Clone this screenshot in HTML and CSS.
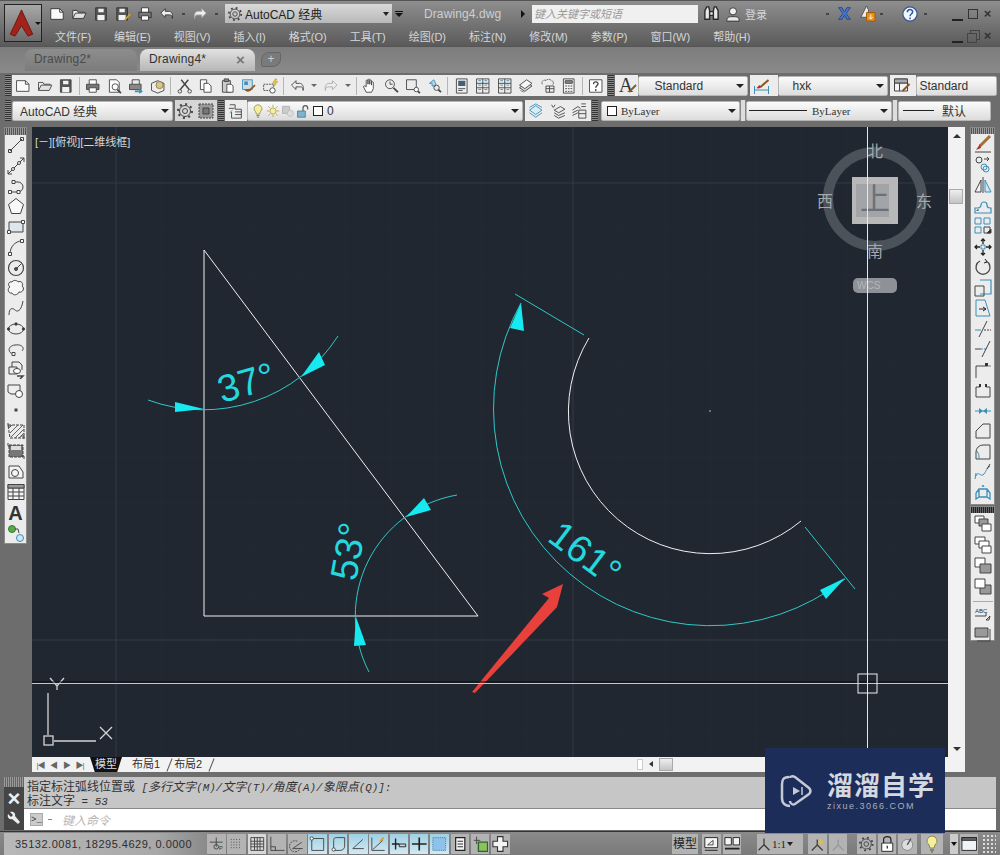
FILE: index.html
```html
<!DOCTYPE html>
<html lang="zh">
<head>
<meta charset="utf-8">
<title>Drawing4.dwg - AutoCAD</title>
<link rel="stylesheet" href="styles.css">
</head>
<body>
<svg class="defs" aria-hidden="true">
<symbol id="new" viewBox="0 0 18 18"><path d="M2 3h10l4 4v8H2z" fill="#fafafa"/><path d="M12 3v4h4"/></symbol>
<symbol id="open" viewBox="0 0 18 18"><path d="M2 14V5h5l1 2h7v2" fill="#f0f0f0"/><path d="M2 14l3-6h12l-3 6z" fill="#e2e2e2"/></symbol>
<symbol id="save" viewBox="0 0 18 18"><path d="M3 2h12v14H3z" fill="#555"/><path d="M6 3h6v4H6zM5 10h8v6H5z" fill="#f2f2f2" stroke="none"/></symbol>
<symbol id="saveas" viewBox="0 0 18 18"><path d="M2 2h12v14H2z" fill="#555"/><path d="M5 3h6v4H5zM4 10h8v6H4z" fill="#f2f2f2" stroke="none"/><path d="M17 9l-6 7" stroke="#d8a020" stroke-width="2"/></symbol>
<symbol id="print" viewBox="0 0 18 18"><path d="M5 7V2h8v5" fill="#fff"/><path d="M2 7h14v6H2z" fill="#777"/><path d="M5 11h8v5H5z" fill="#fff"/></symbol>
<symbol id="preview" viewBox="0 0 18 18"><path d="M3 2h8l3 3v11H3z" fill="#fff"/><circle cx="9.500" cy="10" r="3.500"/><path d="M12 13l4 4" stroke-width="2"/></symbol>
<symbol id="publish" viewBox="0 0 18 18"><path d="M5 7V2h8v5"/><path d="M2 7h13v6H2z" fill="#888"/><path d="M8 15h8" class="blue" stroke-width="2"/><path d="M13 12l4 3-4 3z" class="bluef"/></symbol>
<symbol id="cube" viewBox="0 0 18 18"><path d="M2 6l7-3 7 3v8l-7 3-7-3z" fill="#eee"/><circle cx="11" cy="8" r="4" fill="#d8c690" stroke="#8a7a40"/></symbol>
<symbol id="cut" viewBox="0 0 18 18"><path d="M5 2l9 11M13 2L4 13" stroke-width="1.600"/><circle cx="3.500" cy="15" r="2"/><circle cx="14.500" cy="15" r="2"/></symbol>
<symbol id="copy" viewBox="0 0 18 18"><path d="M3 2h7v11H3z" fill="#fff"/><path d="M7 6h5l3 3v7H7z" fill="#fff"/></symbol>
<symbol id="paste" viewBox="0 0 18 18"><path d="M3 3h9v13H3z" fill="#ccc"/><path d="M5 1h5v3H5z" fill="#888"/><path d="M8 7h5l2 2v7H8z" fill="#fff"/></symbol>
<symbol id="match" viewBox="0 0 18 18"><path d="M2 2h11v11H2z" fill="#cfdbe6" class="blue"/><path d="M4 4h4v4H4z" class="bluef"/><path d="M16 8l-6 6" stroke="#8a5a20" stroke-width="2"/><path d="M4 13c2 3 5 3 7 1l-1-2z" fill="#8a5a20" stroke="none"/></symbol>
<symbol id="block" viewBox="0 0 18 18"><path d="M1 7h11v7H1z" stroke-dasharray="2 1"/><circle cx="11" cy="14" r="3" fill="#fff"/><path d="M14 1l-3 5h3l-2 4 5-6h-3l2-3z" fill="#f0c840" stroke="#b08a10" stroke-width=".5"/></symbol>
<symbol id="undo" viewBox="0 0 18 18"><path d="M7 3L2 8l5 5v-3h5c2 0 3 1 3 4 1-5-1-8-4-8H7z" fill="#eee"/></symbol>
<symbol id="redo" viewBox="0 0 18 18"><path d="M11 3l5 5-5 5v-3H6c-2 0-3 1-3 4-1-5 1-8 4-8h4z" fill="#eee" stroke="#aaa"/></symbol>
<symbol id="pan" viewBox="0 0 18 18"><path d="M5 16L2 10c0-2 2-1 3 0V3c0-1 2-1 2 0v4-5c0-1 2-1 2 0v5-4c0-1 2-1 2 0v5-3c0-1 2-1 2 0v7l-2 4z" fill="#fff"/></symbol>
<symbol id="zrt" viewBox="0 0 18 18"><circle cx="7" cy="7" r="5"/><path d="M7 4v3h3"/><path d="M11 11l5 5" stroke-width="2"/></symbol>
<symbol id="zwin" viewBox="0 0 18 18"><path d="M2 2h11v11H2z"/><circle cx="13" cy="13" r="2.500" fill="#fff"/><path d="M15 15l2 2" stroke-width="2"/></symbol>
<symbol id="zprev" viewBox="0 0 18 18"><path d="M8 2L3 6h3v3h4V6z" class="blue" fill="#b8d4e4"/><circle cx="11" cy="11" r="3"/><path d="M13 13l3 3" stroke-width="2"/></symbol>
<symbol id="props" viewBox="0 0 18 18"><path d="M3 1h12v16H3z" fill="#eee"/><path d="M5 3h8v6H5z" fill="#47607a" stroke="none"/><path d="M5 12h8M5 14h5"/></symbol>
<symbol id="design" viewBox="0 0 18 18"><path d="M2 1h14v16H2zM9 1v16M2 6h14M2 11h14"/><path d="M4 3h3M11 3h3M4 8h3M11 8h3M4 13h3M11 13h3" class="blue"/></symbol>
<symbol id="sheet" viewBox="0 0 18 18"><path d="M2 11l8-6 6 4-8 6z" fill="#ddd"/><path d="M2 8l8-6 6 4-8 6z" fill="#f6f6f6"/><path d="M3 14l4 2" class="blue"/></symbol>
<symbol id="cloud" viewBox="0 0 18 18"><path d="M3 7c-2-3 2-6 4-4 1-2 5-2 6 0 3 0 3 4 1 5" stroke-dasharray="2 1"/><path d="M7 9h9v7H7zM7 12h9M11 9v7"/></symbol>
<symbol id="calc" viewBox="0 0 18 18"><path d="M3 1h12v16H3z" fill="#f2f2f2"/><path d="M5 3h8v3H5z" fill="#888"/><path d="M5 9h8M5 12h8M5 15h8" stroke-dasharray="2 1"/></symbol>
<symbol id="help" viewBox="0 0 18 18"><path d="M2 2h14v14H2z" fill="#fff"/><path d="M6.500 7c0-4 5.500-3 5-.500 0 2-2.500 2-2.500 4.500M9 12.500v2" stroke-width="1.500"/></symbol>
<symbol id="gear" viewBox="0 0 18 18"><circle cx="9" cy="9" r="5.500" stroke-width="1"/><circle cx="9" cy="9" r="2.500"/><circle cx="9" cy="9" r="7" stroke-dasharray="2 3.500" stroke-width="2"/></symbol>
<symbol id="wsave" viewBox="0 0 18 18"><path d="M2 2h14v14H2z" fill="#999" stroke-dasharray="2 1"/><path d="M6 6h6v6H6z" fill="#777"/></symbol>
<symbol id="layers" viewBox="0 0 18 18"><path d="M2 2h6v5h7v10H4V10M8 10h7M8 13h7"/><path d="M1 6h6"/><path d="M2 11l3-3" class="blue"/></symbol>
<symbol id="bulb" viewBox="0 0 18 18"><path d="M9 1a5 5 0 0 0-3 9l1 3h4l1-3a5 5 0 0 0-3-9z" fill="#f6ee9c" stroke="#8a8a50"/><path d="M7 15h4M8 17h2" stroke="#555"/></symbol>
<symbol id="sun" viewBox="0 0 18 18"><circle cx="9" cy="9" r="4" fill="#f6ee9c" stroke="#9a9a50"/><path d="M9 1v3M9 14v3M1 9h3M14 9h3M3 3l2 2M13 13l2 2M3 15l2-2M13 5l2-2" stroke="#b09a40"/></symbol>
<symbol id="lfreeze" viewBox="0 0 18 18"><path d="M2 3h9v9H2z" fill="#ccc" stroke="#aaa"/><circle cx="12" cy="12" r="4" fill="#ddd" stroke="#bbb"/></symbol>
<symbol id="unlock" viewBox="0 0 18 18"><path d="M2 9h10v8H2z" fill="#7fb3d0" stroke="#3b7898"/><path d="M9 9V5c0-4 6-4 6 0v2" stroke="#555" stroke-width="1.500"/></symbol>
<symbol id="lay1" viewBox="0 0 18 18"><path d="M2 8l7-5 7 5-7 5z" fill="#d8ecf4" class="blue"/><path d="M2 11l7 5 7-5M2 5l7-4 7 4" class="blue"/></symbol>
<symbol id="lay2" viewBox="0 0 18 18"><path d="M2 2l2 3 2-3M5 8l7-4 5 3-7 4zM5 11l5 3 7-3M5 14l5 3 7-3"/></symbol>
<symbol id="lay3" viewBox="0 0 18 18"><path d="M2 8l6-4 3 2M2 11l6-3M2 14l6-3"/><path d="M9 8h8v9H9zM9 12h8M12 1h5M12 4h5"/></symbol>
<symbol id="brush" viewBox="0 0 18 18"><path d="M17 7l-7 7" stroke="#8a5a20" stroke-width="2"/></symbol>
<symbol id="dimstyle" viewBox="0 0 18 18"><path d="M2 9v8M16 9v8M2 13h14" class="blue"/><path d="M16 3L8 10" stroke="#8a5a20" stroke-width="2"/><path d="M4 11c2 1 4 0 5-1l-2-2z" fill="#b0302a" stroke="none"/></symbol>
<symbol id="tablestyle" viewBox="0 0 18 18"><path d="M2 2h13v12H2zM2 6h13M7 6v8" fill="#f4f4f4"/><path d="M2 2h13v4H2z" fill="#aaa"/><path d="M17 7l-7 7" stroke="#8a5a20" stroke-width="2"/></symbol>

<symbol id="line" viewBox="0 0 18 18"><path d="M3 15L15 3"/><path d="M1.500 13.500h3v3h-3zM13.500 1.500h3v3h-3z"/></symbol>
<symbol id="xline" viewBox="0 0 18 18"><path d="M1 17L17 1M13 1h4v4M1 13v4h4"/><circle cx="6" cy="12" r="1.500" fill="#fff"/><circle cx="12" cy="6" r="1.500" fill="#fff"/></symbol>
<symbol id="pline" viewBox="0 0 18 18"><path d="M3 15h8a5 5 0 0 0 0-10H7"/><path d="M1.500 13.500h3v3h-3zM5 3.500h3v3H5zM10 13.500h3v3h-3z" fill="#fff"/></symbol>
<symbol id="polygon" viewBox="0 0 18 18"><path d="M9 1.500l7.500 6-3 9h-9l-3-9z" fill="#f8f8f8"/></symbol>
<symbol id="rect" viewBox="0 0 18 18"><path d="M2 4h14v10H2z" fill="#dfe6ec"/><path d="M.5 12.500h3v3h-3zM14.500 2.500h3v3h-3z" fill="#fff"/></symbol>
<symbol id="arc" viewBox="0 0 18 18"><path d="M3 16C3 9 8 3 15 3"/><path d="M1.500 14.500h3v3h-3zM13.500 1.500h3v3h-3z" fill="#fff"/></symbol>
<symbol id="circle" viewBox="0 0 18 18"><circle cx="9" cy="9" r="7.500" stroke-width="1.200"/><circle cx="9" cy="10" r="1.500" fill="#555"/><path d="M9 10l5-5"/></symbol>
<symbol id="rev" viewBox="0 0 18 18"><path d="M5 3c2-3 6-1 6 0 3-2 6 2 4 4 3 2 1 7-3 6-1 3-6 4-7 1-4 1-5-5-2-6-3-2-1-6 2-5z" fill="#f6f6f6"/></symbol>
<symbol id="spline" viewBox="0 0 18 18"><path d="M2 16c0-8 4-7 6-5s6 2 8-9"/></symbol>
<symbol id="ellipse" viewBox="0 0 18 18"><ellipse cx="9" cy="9" rx="7.500" ry="5"/><circle cx="9" cy="4" r="1.200" fill="#333"/><circle cx="1.500" cy="9" r="1.200" fill="#333"/><circle cx="16.500" cy="9" r="1.200" fill="#333"/></symbol>
<symbol id="earc" viewBox="0 0 18 18"><path d="M6 14C1 13 0 6 8 5c7-1 10 3 7 6"/><path d="M5 12.500h3v3H5z" fill="#fff"/></symbol>
<symbol id="insert" viewBox="0 0 18 18"><path d="M5 1h7l3 3v5M5 1v5"/><path d="M2 6h8v7H2z" fill="#eee"/><ellipse cx="10" cy="10" rx="3.500" ry="2.500" fill="#fff"/><path d="M10 15h6l-3 3" stroke-width="1.500"/></symbol>
<symbol id="mblock" viewBox="0 0 18 18"><path d="M1 4h12v9H4l-3-2z" fill="#eee"/><circle cx="12" cy="13" r="3.500" fill="#fff"/></symbol>
<symbol id="point" viewBox="0 0 18 18"><rect x="7.500" y="7.500" width="3" height="3" fill="#444" stroke="none"/></symbol>
<symbol id="hatch" viewBox="0 0 18 18"><path d="M1 3h16v13H3z" stroke-dasharray="3 1"/><path d="M1 7l4-4M3 11l8-8M4 15l12-12M8 16l9-9M12 16l5-5" stroke="#666"/><path d="M1 1v3h3M14 14h3v3"/></symbol>
<symbol id="grad" viewBox="0 0 18 18"><path d="M2 3h14v12H2z" fill="#777" stroke-dasharray="3 1"/><path d="M4 4h10v4H4z" fill="#ddd" stroke="none"/><path d="M1 1v3h3M14 14h3v3"/></symbol>
<symbol id="region" viewBox="0 0 18 18"><path d="M2 3h10l4 6v6H2z" fill="#f4f4f4"/><circle cx="8" cy="10" r="3.500"/></symbol>
<symbol id="table" viewBox="0 0 18 18"><path d="M1 1.500h16v15H1zM1 5h16M1 9h16M1 13h16M6 5v11.500M12 5v11.500" fill="#f4f4f4"/><path d="M1 1.500h16V5H1z" fill="#999"/></symbol>
<symbol id="addsel" viewBox="0 0 18 18"><circle cx="5" cy="5" r="3.500" fill="#5aa84a" stroke="#3a7a30"/><circle cx="13" cy="14" r="3.500" fill="#cfe6f4" class="blue"/><path d="M8 5h3l1 4"/></symbol>

<symbol id="erase" viewBox="0 0 18 18"><path d="M16 1L6 11" stroke="#a87038" stroke-width="3"/><path d="M6 9l-4 6 5-2z" fill="#b0302a" stroke="none"/><path d="M1 17h16"/></symbol>
<symbol id="mcopy" viewBox="0 0 18 18"><circle cx="5" cy="4" r="3"/><circle cx="12" cy="13" r="3" class="blue"/><circle cx="10" cy="11" r="3" class="blue"/><path d="M10 3h5l-2-2M15 3l-2 2"/></symbol>
<symbol id="mirror" viewBox="0 0 18 18"><path d="M9 1v16"/><path d="M7 4v12H1z" fill="#f4f4f4"/><path d="M11 4v12h6z" class="blue" fill="#cfe6f4"/></symbol>
<symbol id="offset" viewBox="0 0 18 18"><path d="M1 16V11h3a3 3 0 0 0 3-3 3 3 0 0 1 6 0 3 3 0 0 0 3 3h1v5z" class="blue" stroke-width="1.200"/><path d="M3 14v-1h2"/></symbol>
<symbol id="array" viewBox="0 0 18 18"><path d="M1 1h6v6H1zM10 1h6v6h-6zM1 10h6v6H1z" class="blue"/><path d="M10 10h6v6h-6z"/><path d="M13 16l4-4v4z" fill="#222"/></symbol>
<symbol id="move" viewBox="0 0 18 18"><path d="M7 7h4v4H7z" class="blue"/><path d="M9 1v5M9 12v5M1 9h5M12 9h5M7 3l2-2 2 2M7 15l2 2 2-2M3 7L1 9l2 2M15 7l2 2-2 2" stroke="#222" stroke-width="1.300"/></symbol>
<symbol id="rotate" viewBox="0 0 18 18"><path d="M6 3a7 7 0 1 0 6 0" stroke-width="1.300"/><path d="M11 1l2 3-3 1" stroke="#222"/></symbol>
<symbol id="scale" viewBox="0 0 18 18"><path d="M6 1h11v14H6" class="blue" stroke-width="1.200"/><path d="M1 7h9v10H1z"/></symbol>
<symbol id="stretch" viewBox="0 0 18 18"><path d="M2 1h9l5 16H2z" class="blue"/><path d="M5 10h7M9 8l3 2-3 2" stroke="#222"/></symbol>
<symbol id="trim" viewBox="0 0 18 18"><path d="M1 10h6" class="blue"/><path d="M10 10h7" stroke-dasharray="2 1"/><path d="M13 1L5 17"/></symbol>
<symbol id="extend" viewBox="0 0 18 18"><path d="M1 9h6"/><path d="M7 9h5" class="blue" stroke-dasharray="2 1"/><path d="M16 1L8 17"/></symbol>
<symbol id="breakat" viewBox="0 0 18 18"><path d="M2 17V5h11"/><path d="M13 5h4" stroke="#777"/><rect x="11" y="2" width="3" height="3" fill="#333" stroke="none"/></symbol>
<symbol id="brk" viewBox="0 0 18 18"><path d="M2 16V6h4M12 6h4v10"/><path d="M5 3h2v3H5zM11 3h2v3h-2z" fill="#333" stroke="none"/><path d="M2 16h14"/></symbol>
<symbol id="join" viewBox="0 0 18 18"><path d="M1 9h16" class="blue"/><path d="M5 6l4 3-4 3zM13 6L9 9l4 3z" class="bluef"/></symbol>
<symbol id="chamfer" viewBox="0 0 18 18"><path d="M2 16V9l7-7h7v14z"/></symbol>
<symbol id="fillet" viewBox="0 0 18 18"><path d="M2 16V9a7 7 0 0 1 7-7h7v14z"/><path d="M5 16a10 10 0 0 0-2-8" class="blue"/></symbol>
<symbol id="blend" viewBox="0 0 18 18"><path d="M1 16l1-6M2 13c2-6 5 2 8-2s2-5 6-8" class="blue"/><path d="M13 6l3-5"/></symbol>
<symbol id="explode" viewBox="0 0 18 18"><path d="M5 5h8v8H5zM2 9l3-4M13 5l3 4v6l-3-2M2 9v6l3-2" class="blue" stroke-width="1.300"/><path d="M8 3l1-2 1 2" class="blue"/></symbol>
<symbol id="front" viewBox="0 0 18 18"><path d="M1 1h9v7H1z" fill="#fff"/><path d="M5 4h9v7H5z" fill="#999"/><path d="M8 9h9v7H8z" fill="#fff"/></symbol>
<symbol id="back" viewBox="0 0 18 18"><path d="M1 1h10v7H1z" fill="#fff"/><path d="M5 5h10v7H5z" fill="#fff"/><path d="M8 10h9v7H8z" fill="#fff"/></symbol>
<symbol id="over" viewBox="0 0 18 18"><path d="M1 1h10v9H1z" fill="#fff"/><path d="M6 7h11v9H6z" fill="#999"/></symbol>
<symbol id="under" viewBox="0 0 18 18"><path d="M6 7h11v9H6z" fill="#999"/><path d="M1 1h10v9H1z" fill="#fff"/></symbol>
<symbol id="abc" viewBox="0 0 18 18"><path d="M1 11h11V8M15 15h-3l4-4z"/></symbol>
<symbol id="sz" viewBox="0 0 18 18"><path d="M1 2h13v9H1z" fill="#999"/><path d="M16 3v12M3 15h13"/></symbol>

<symbol id="s1" viewBox="0 0 18 18"><path d="M2 7h14M9 2v10"/><circle cx="9" cy="12" r="2.500"/></symbol>
<symbol id="s2" viewBox="0 0 18 18"><path d="M3 4h12M3 7h12M3 10h12M3 13h12" stroke-dasharray="1 2"/></symbol>
<symbol id="s3" viewBox="0 0 18 18"><path d="M2 2h14v14H2zM2 6h14M2 9h14M2 12h14M6 2v14M9 2v14M12 2v14"/></symbol>
<symbol id="s4" viewBox="0 0 18 18"><path d="M2 1v15h15M2 12h5v4"/></symbol>
<symbol id="s5" viewBox="0 0 18 18"><path d="M4 14l10-7M4 14h11"/><path d="M9 6a6 6 0 1 0 3 8" stroke-dasharray="2 1"/></symbol>
<symbol id="s6" viewBox="0 0 18 18"><path d="M3 3h13v13H3z"/><circle cx="3" cy="3" r="1.800" fill="#fff"/></symbol>
<symbol id="s7" viewBox="0 0 18 18"><path d="M4 14V5c0-2 1-3 3-3h9v9c0 3-2 5-5 5H5"/><circle cx="4" cy="15" r="1.800" fill="#fff"/></symbol>
<symbol id="s8" viewBox="0 0 18 18"><path d="M3 14L14 4M3 14h12"/></symbol>
<symbol id="s9" viewBox="0 0 18 18"><path d="M2 2v14h14M3 15L14 5"/><path d="M11 6l4-4" stroke="#e0a020" stroke-width="2"/></symbol>
<symbol id="s10" viewBox="0 0 18 18"><path d="M1 9h8M5 3v12" stroke="#222" stroke-width="1.500"/><path d="M9 9h7v3H9z" stroke="#222"/></symbol>
<symbol id="s11" viewBox="0 0 18 18"><path d="M1 9h16M9 2v14" stroke="#222" stroke-width="1.800"/></symbol>
<symbol id="s12" viewBox="0 0 18 18"><path d="M2 2h14v14H2z" fill="#8ec2ea" stroke="#3b7898" stroke-dasharray="1 1"/></symbol>
<symbol id="s13" viewBox="0 0 18 18"><path d="M4 2h10v14H4z" fill="#f4f4f4" stroke="#222" stroke-width="1.300"/><path d="M6 6h6M6 9h6M6 12h6" stroke="#222"/></symbol>
<symbol id="s14" viewBox="0 0 18 18"><path d="M2 5h7M5 1v8"/><path d="M7 7h10v10H7z" fill="#8cc060" stroke="#2a6a20" stroke-width="1.500"/></symbol>
<symbol id="s15" viewBox="0 0 18 18"><path d="M6 1h6v5h5v6h-5v5H6v-5H1V6h5z" fill="#f4f4f4" stroke="#333" stroke-width="1.200"/></symbol>
<symbol id="pap" viewBox="0 0 18 18"><path d="M2 2h14v11H2z" fill="#f4f4f4" stroke="#222"/><path d="M5 10l6-5v5z"/><path d="M2 16h14" stroke-width="1.500"/></symbol>
<symbol id="qv" viewBox="0 0 18 18"><path d="M1 2h7v8H1zM10 2h7v8h-7z" fill="#f4f4f4" stroke="#222"/><path d="M1 14h16" stroke-width="2" stroke="#222"/></symbol>
<symbol id="ann" viewBox="0 0 18 18"><path d="M9 2v8M9 10l-7 7M9 10l7 7" stroke="#333" stroke-width="1.500"/></symbol>
<symbol id="ann2" viewBox="0 0 18 18"><path d="M9 4v6L3 16M9 10l6 6" stroke="#444" stroke-width="1.500"/><path d="M12 3l2 3 3 1-3 1-1 3-1-3-3-1 3-1z" fill="#e8c040" stroke="none"/></symbol>
<symbol id="ann3" viewBox="0 0 18 18"><path d="M9 4v6L3 16M9 10l6 6" stroke="#999" stroke-width="1.500"/></symbol>
<symbol id="lockb" viewBox="0 0 18 18"><path d="M3 8h12v9H3z" fill="#fff" stroke="#222"/><path d="M5 8V4c0-4 8-4 8 0v4M9 11v3" stroke="#222" stroke-width="1.300"/></symbol>
<symbol id="hw" viewBox="0 0 18 18"><circle cx="9" cy="10" r="6" fill="#ddd" stroke="#888"/><path d="M9 10l4-7" stroke="#555" stroke-width="1.500"/></symbol>
<symbol id="win" viewBox="0 0 18 18"><path d="M1 2h16v14H1z" fill="#eef4f8" stroke="#222"/><path d="M1 2h16v3H1z" fill="#666" stroke="#222"/></symbol>
<symbol id="binoc" viewBox="0 0 18 18"><path d="M2 15V6l2-4h2l1 4v9zM16 15V6l-2-4h-2l-1 4v9zM7 7h4v4H7z" fill="#e8e8e8" stroke="#2a2a2a" stroke-width="1.500"/></symbol>
<symbol id="user" viewBox="0 0 18 18"><circle cx="9" cy="6" r="4" fill="#f0f0f0" stroke="#333"/><path d="M2 17c0-5 3-5 7-5s7 0 7 5z" fill="#e8e8e8" stroke="#333"/></symbol>
<symbol id="xlogo" viewBox="0 0 18 18"><path d="M2 2h4l3 5 3-5h4l-5 7 5 7h-4l-3-5-3 5H2l5-7z" fill="#4a78c8" stroke="#1e3e88"/></symbol>
<symbol id="alert" viewBox="0 0 18 18"><path d="M8 1L2 13h8V5z" fill="#eee" stroke="#555"/><path d="M8 8h9v9H8z" fill="#e89020" stroke="#a05a00"/><path d="M12.500 10v4M10.500 13l2 2 2-2" stroke="#fff"/></symbol>
<symbol id="ques" viewBox="0 0 18 18"><circle cx="9" cy="9" r="8" fill="#f4f8fc" stroke="#3a5a90" stroke-width="1.400"/><path d="M6 7c0-4 6-4 6-.500C12 9 9 9 9 11.500M9 13v1.800" stroke="#2a5ab0" stroke-width="1.800"/></symbol>
</svg>

<header class="title">
  <div class="app-btn">
    <svg class="app-logo" viewBox="0 0 26 30"><path d="M13 1L1 27l5 2 7-11 7 11 5-2z" class="logo-a"/></svg>
    <span class="app-arrow"></span>
  </div>
  <div class="title-col">
    <div class="qat">
      <svg class="i q"><use href="#new"/></svg>
      <svg class="i q"><use href="#open"/></svg>
      <svg class="i q"><use href="#save"/></svg>
      <svg class="i q"><use href="#saveas"/></svg>
      <svg class="i q"><use href="#print"/></svg>
      <svg class="i q"><use href="#undo"/></svg>
      <span class="dot"></span>
      <svg class="i q"><use href="#redo"/></svg>
      <span class="dot"></span>
      <div class="ws-combo"><svg class="i"><use href="#gear"/></svg><span>AutoCAD 经典</span></div>
      <span class="down-bar"></span>
      <span class="doc-name">Drawing4.dwg</span>
      <span class="right-arrow"></span>
      <div class="search">键入关键字或短语</div>
      <svg class="i s-binoc"><use href="#binoc"/></svg>
      <svg class="i s-user"><use href="#user"/></svg>
      <span class="login">登录</span>
      <span class="dot d-login"></span>
      <svg class="i s-x"><use href="#xlogo"/></svg>
      <svg class="i s-alert"><use href="#alert"/></svg>
      <span class="dot d-alert"></span>
      <svg class="i s-help"><use href="#ques"/></svg>
      <span class="dot d-help"></span>
      <div class="winctl top"><i class="min"></i><i class="max"></i><i class="cls">×</i></div>
    </div>
    <nav class="menu">
      <span>文件(F)</span><span>编辑(E)</span><span>视图(V)</span><span>插入(I)</span><span>格式(O)</span><span>工具(T)</span><span>绘图(D)</span><span>标注(N)</span><span>修改(M)</span><span>参数(P)</span><span>窗口(W)</span><span>帮助(H)</span>
      <div class="winctl"><i class="min"></i><i class="rst"></i><i class="cls">×</i></div>
    </nav>
  </div>
</header>

<div class="tabs">
  <div class="tab">Drawing2*</div>
  <div class="tab active">Drawing4*<b>×</b></div>
  <div class="tab-add"><span>+</span></div>
</div>

<div class="tbar one">
  <span class="grip"></span>
  <div class="strip">
    <svg class="i b"><use href="#new"/></svg><svg class="i b"><use href="#open"/></svg><svg class="i b"><use href="#save"/></svg><span class="sep"></span>
    <svg class="i b"><use href="#print"/></svg><svg class="i b"><use href="#preview"/></svg><svg class="i b"><use href="#publish"/></svg><svg class="i b"><use href="#cube"/></svg><span class="sep"></span>
    <svg class="i b"><use href="#cut"/></svg><svg class="i b"><use href="#copy"/></svg><svg class="i b"><use href="#paste"/></svg><svg class="i b"><use href="#match"/></svg><svg class="i b"><use href="#block"/></svg><span class="sep"></span>
    <svg class="i b"><use href="#undo"/></svg><span class="drop"></span><svg class="i b"><use href="#redo"/></svg><span class="drop"></span><span class="sep"></span>
    <svg class="i b"><use href="#pan"/></svg><svg class="i b"><use href="#zrt"/></svg><svg class="i b"><use href="#zwin"/></svg><svg class="i b"><use href="#zprev"/></svg><span class="sep"></span>
    <svg class="i b"><use href="#props"/></svg><svg class="i b"><use href="#design"/></svg><svg class="i b"><use href="#design"/></svg><svg class="i b"><use href="#sheet"/></svg><svg class="i b"><use href="#cloud"/></svg><svg class="i b"><use href="#calc"/></svg><span class="sep"></span>
    <svg class="i b"><use href="#help"/></svg>
  </div>
  <span class="grip"></span>
  <div class="strip s-a"><span class="a-glyph">A</span><svg class="i a-brush"><use href="#brush"/></svg></div>
  <div class="combo c-std">Standard</div>
  <div class="strip s-d"><svg class="i b"><use href="#dimstyle"/></svg></div>
  <div class="combo c-hxk">hxk</div>
  <div class="strip s-t"><svg class="i b"><use href="#tablestyle"/></svg></div>
  <div class="combo c-std3">Standard</div>
</div>

<div class="tbar two">
  <span class="grip"></span>
  <div class="combo c-ws">AutoCAD 经典</div>
  <div class="strip s-g"><svg class="i g"><use href="#gear"/></svg><svg class="i g"><use href="#wsave"/></svg></div>
  <span class="grip"></span>
  <div class="strip s-l"><svg class="i b"><use href="#layers"/></svg></div>
  <div class="combo c-layer">
    <svg class="i l"><use href="#bulb"/></svg><svg class="i l"><use href="#sun"/></svg><svg class="i l"><use href="#lfreeze"/></svg><svg class="i l"><use href="#unlock"/></svg><span class="swatch"></span><span>0</span>
  </div>
  <div class="strip s-m"><svg class="i b"><use href="#lay1"/></svg><svg class="i b"><use href="#lay2"/></svg><svg class="i b"><use href="#lay3"/></svg></div>
  <span class="grip"></span>
  <div class="combo c-color"><span class="swatch"></span><span class="serif">ByLayer</span></div>
  <span class="grip light"></span>
  <div class="combo c-ltype"><span class="ln long"></span><span class="serif">ByLayer</span></div>
  <span class="grip light"></span>
  <div class="combo c-lw"><span class="ln short"></span><span>默认</span></div>
</div>

<main class="main">
  <aside class="vbar left">
    <span class="hgrip"></span>
    <svg class="i v"><use href="#line"/></svg><svg class="i v"><use href="#xline"/></svg><svg class="i v"><use href="#pline"/></svg><svg class="i v"><use href="#polygon"/></svg><svg class="i v"><use href="#rect"/></svg><svg class="i v"><use href="#arc"/></svg><svg class="i v"><use href="#circle"/></svg><svg class="i v"><use href="#rev"/></svg><svg class="i v"><use href="#spline"/></svg><svg class="i v"><use href="#ellipse"/></svg><svg class="i v"><use href="#earc"/></svg><svg class="i v"><use href="#insert"/></svg><svg class="i v"><use href="#mblock"/></svg><svg class="i v"><use href="#point"/></svg><svg class="i v"><use href="#hatch"/></svg><svg class="i v"><use href="#grad"/></svg><svg class="i v"><use href="#region"/></svg><svg class="i v"><use href="#table"/></svg>
    <span class="big-a">A</span>
    <svg class="i v"><use href="#addsel"/></svg>
  </aside>

  <section class="center">
    <div class="view-row">
      <div class="canvas">
        <svg class="drawing" viewBox="32 127 916 630">
          <g class="grid-minor">
            <path d="M162 127v630M208 127v630M253 127v630M299 127v630M345 127v630M390 127v630M436 127v630M482 127v630M527 127v630M619 127v630M665 127v630M710 127v630M756 127v630M802 127v630M847 127v630M893 127v630"/>
            <path d="M32 229h916M32 275h916M32 320h916M32 366h916M32 412h916M32 457h916M32 503h916M32 549h916M32 594h916M32 686h916M32 732h916"/>
          </g>
          <path class="grid-major" d="M116 127v630M573 127v630M32 183h916M32 640h916"/>

          <path class="white" d="M204 250L478 616H204Z"/>
          <path class="white" d="M589 338A142 142 0 0 0 801 521"/>
          <circle class="dot-c" cx="710" cy="411" r=".7"/>

          <path class="cyan" d="M148 400A160 160 0 0 0 338 336"/>
          <path class="cyan" d="M457 495A122.500 122.500 0 0 0 369 672"/>
          <path class="cyan" d="M521 303A217 217 0 0 0 845 579"/>
          <path class="cyan" d="M515 294L584 335M805 527L855 589"/>
          <path class="arrow" d="M204 409L175 402L175 412Z"/>
          <path class="arrow" d="M301 377L319 352L325 365Z"/>
          <path class="arrow" d="M406 517L424 498L431 510Z"/>
          <path class="arrow" d="M356 617L354 646L366 645Z"/>
          <path class="arrow" d="M521 303L510 328L524 331Z"/>
          <path class="arrow" d="M845 578L820 590L826 599Z"/>
          <text class="dim" transform="translate(222 403) rotate(-16)">37°</text>
          <text class="dim" transform="translate(356 582) rotate(-80)">53°</text>
          <text class="dim" transform="translate(546 540) rotate(37)">161°</text>

          <path class="red" d="M563 584L542 594L549 598L472 692L475 693L557 607Z"/>

          <path class="ucs" d="M48 693V735M54 741H96M100 727L112 739M112 727L100 739M50 678L57 686L64 678M57 686V690"/>
          <rect class="ucs" x="44" y="736" width="9" height="9"/>

          <g class="cube-g">
            <circle class="ring" cx="875" cy="199" r="47"/>
            <rect class="cube-face" x="852" y="177" width="46" height="47"/>
            <rect class="cube-in" x="856" y="184" width="33" height="33"/>
            <text class="cube-top" x="875" y="209">上</text>
            <text class="cube-dir" x="875" y="157">北</text>
            <text class="cube-dir" x="875" y="257">南</text>
            <text class="cube-dir" x="825" y="207">西</text>
            <text class="cube-dir" x="924" y="207">东</text>
            <rect class="wcs" x="853" y="278" width="44" height="15" rx="5"/>
            <text class="wcs-t" x="857" y="289">WCS</text>
          </g>

          <path class="cross-shadow" d="M32 682H948"/>
          <path class="cross-h" d="M32 683.500H948"/>
          <path class="cross-v" d="M867.500 127V757"/>
          <rect class="pick" x="858" y="674" width="19" height="19"/>
        </svg>
        <div class="vp-label">[－][俯视][二维线框]</div>
      </div>
      <div class="vscroll"><span class="up"></span><span class="thumb"></span><span class="dn"></span></div>
    </div>
    <div class="layouts">
      <span class="nav">|◀</span><span class="nav">◀</span><span class="nav">▶</span><span class="nav">▶|</span>
      <span class="ltab cur">模型</span><span class="ltab slash">布局1</span><span class="ltab slash">布局2</span>
      <span class="hhandle"></span><span class="harrow"></span><span class="hthumb"></span>
    </div>
  </section>

  <aside class="rightcol">
    <div class="vbar right">
      <span class="hgrip"></span>
      <svg class="i v"><use href="#erase"/></svg><svg class="i v"><use href="#mcopy"/></svg><svg class="i v"><use href="#mirror"/></svg><svg class="i v"><use href="#offset"/></svg><svg class="i v"><use href="#array"/></svg><svg class="i v"><use href="#move"/></svg><svg class="i v"><use href="#rotate"/></svg><svg class="i v"><use href="#scale"/></svg><svg class="i v"><use href="#stretch"/></svg><svg class="i v"><use href="#trim"/></svg><svg class="i v"><use href="#extend"/></svg><svg class="i v"><use href="#breakat"/></svg><svg class="i v"><use href="#brk"/></svg><svg class="i v"><use href="#join"/></svg><svg class="i v"><use href="#chamfer"/></svg><svg class="i v"><use href="#fillet"/></svg><svg class="i v"><use href="#blend"/></svg><svg class="i v"><use href="#explode"/></svg>
    </div>
    <div class="vbar right2">
      <span class="hgrip"></span>
      <svg class="i v"><use href="#front"/></svg><svg class="i v"><use href="#back"/></svg><svg class="i v"><use href="#over"/></svg><svg class="i v"><use href="#under"/></svg>
      <span class="hsep"></span>
      <svg class="i v" viewBox="0 0 18 18"><text x="1" y="8" class="tiny">ABC</text><use href="#abc"/></svg><svg class="i v"><use href="#sz"/></svg>
    </div>
  </aside>
</main>

<section class="cmd">
  <div class="cmd-side"><span class="hgrip dark"></span><span class="cmd-x">×</span>
    <svg class="wrench" viewBox="0 0 14 14"><path d="M1 3l3 3 2-2-3-3c3-1 6 1 5 4l5 6-2 2-6-5C2 9 0 6 1 3z"/></svg>
  </div>
  <div class="cmd-main">
    <div class="cmd-log">
      <div class="log-line"><span class="cj">指定标注弧线位置或</span> <em>[</em><em class="cj">多行文字</em><em>(M)/</em><em class="cj">文字</em><em>(T)/</em><em class="cj">角度</em><em>(A)/</em><em class="cj">象限点</em><em>(Q)]:</em></div>
      <div class="log-line"><span class="cj">标注文字</span> <em>= 53</em></div>
    </div>
    <div class="cmd-input"><span class="prompt">&gt;_</span><span class="p-drop"></span><span class="ph">键入命令</span></div>
  </div>
</section>

<footer class="status">
  <div class="coords">35132.0081, 18295.4629, 0.0000</div>
  <div class="chips">
    <svg class="i c" viewBox="0 0 18 18"><use href="#s1"/><text x="12" y="16" class="tiny">P</text></svg><svg class="i c"><use href="#s2"/></svg><svg class="i c on"><use href="#s3"/></svg><svg class="i c"><use href="#s4"/></svg><svg class="i c"><use href="#s5"/></svg><svg class="i c act"><use href="#s6"/></svg><svg class="i c act"><use href="#s7"/></svg><svg class="i c act"><use href="#s8"/></svg><svg class="i c act"><use href="#s9"/></svg><svg class="i c act"><use href="#s10"/></svg><svg class="i c act"><use href="#s11"/></svg><svg class="i c act"><use href="#s12"/></svg><svg class="i c"><use href="#s13"/></svg><svg class="i c"><use href="#s14"/></svg><svg class="i c"><use href="#s15"/></svg>
  </div>
  <div class="st-right">
    <span class="st-model">模型</span>
    <svg class="i c"><use href="#pap"/></svg><svg class="i c"><use href="#qv"/></svg>
    <div class="scale"><svg class="i"><use href="#ann"/></svg><span>1:1</span><span class="s-drop"></span></div>
    <svg class="i c"><use href="#ann2"/></svg><svg class="i c"><use href="#ann3"/></svg>
    <svg class="i c sp"><use href="#gear"/></svg><svg class="i c"><use href="#lockb"/></svg><svg class="i c"><use href="#hw"/></svg>
    <div class="bulb-chip"><svg class="i"><use href="#bulb"/></svg></div>
    <span class="st-drop"></span>
    <svg class="i c"><use href="#win"/></svg>
    <span class="resize"></span>
  </div>
</footer>

<aside class="wm">
  <svg class="wm-logo" viewBox="0 0 36 36"><path d="M10 4c-6 0-7 3-7 8v13c0 6 4 8 8 8" class="wm-s"/><path d="M11 5c0-2 3-2 5-1l14 11c2 2 2 4 0 6L16 31c-2 1-5 0-5-3" class="wm-s"/><path d="M14 14l7 4-7 4z" class="wm-f"/><path d="M23 14v8" class="wm-s2"/></svg>
  <div class="wm-text"><div class="wm-cn">溜溜自学</div><div class="wm-en">zixue.3066.COM</div></div>
</aside>
</body>
</html>
```

FILE: styles.css
```css
* { box-sizing: border-box; }
html, body { margin: 0; padding: 0; }
body {
  width: 1000px; height: 855px; overflow: hidden; position: relative;
  background: #6d6d6d;
  font-family: "Liberation Sans", "Noto Sans CJK SC", sans-serif;
  font-size: 12px; color: #222;
}
.defs { position: absolute; width: 0; height: 0; }
.blue { stroke: #3b8fb8; }
.bluef { fill: #3b8fb8; stroke: none; }
.tiny { font: 6px "Liberation Sans", sans-serif; fill: #333; stroke: none; }
.i { display: block; flex: none; width: 18px; height: 18px; fill: none; stroke: #444; stroke-width: 1; }

/* title */
.title { height: 46px; display: flex; background: linear-gradient(#8e8e8e, #777 45%, #5a5a5a); border-top: 1px solid #555; }
.app-btn { margin: 3px 0 0 4px; width: 38px; height: 38px; border: 1px solid #222; background: linear-gradient(#a8a8a8, #6c6c6c); display: flex; align-items: center; padding-left: 4px; gap: 1px; flex: none; }
.app-logo { width: 25px; height: 28px; flex: none; }
.logo-a { fill: #a0231c; stroke: #6e1410; }
.app-arrow { border: 3px solid transparent; border-top: 3px solid #111; margin-top: 4px; }
.title-col { flex: 1; min-width: 0; }
.qat { height: 25px; display: flex; align-items: center; padding-left: 7px; }
.q { width: 16px; height: 16px; margin-right: 6px; stroke: #333; }
.dot { width: 3px; height: 2px; background: #444; margin: 0 7px 0 1px; flex: none; }
.ws-combo { width: 167px; height: 19px; background: linear-gradient(#d9d9d9, #b8b8b8); display: flex; align-items: center; gap: 2px; padding-left: 2px; color: #222; font-size: 12px; position: relative; flex: none; }
.ws-combo .i { width: 16px; height: 16px; }
.ws-combo::after { content: ""; position: absolute; right: 3px; top: 8px; border: 3px solid transparent; border-top: 4px solid #222; }
.down-bar { margin-left: 3px; width: 8px; height: 6px; border-top: 1px solid #111; position: relative; flex: none; }
.down-bar::after { content: ""; position: absolute; left: 0; top: 1px; border: 4px solid transparent; border-top: 4px solid #111; }
.doc-name { margin-left: 21px; color: #cfcfcf; font-size: 12px; letter-spacing: .1px; width: 97px; flex: none; white-space: nowrap; }
.right-arrow { border: 4px solid transparent; border-left: 4px solid #111; flex: none; width: 8px; height: 8px; }
.search { margin-left: 3px; width: 166px; height: 18px; background: #f0f0f0; color: #999; font-style: italic; font-size: 11px; line-height: 18px; padding-left: 2px; flex: none; }
.s-binoc { margin-left: 5px; width: 17px; height: 17px; }
.s-user { margin-left: 5px; width: 16px; height: 16px; }
.login { margin-left: 4px; color: #d5d5d5; font-size: 11px; flex: none; }
.d-login { margin-left: 59px; margin-right: 8px; }
.s-x { width: 15px; height: 15px; }
.s-alert { margin-left: 7px; width: 17px; height: 17px; }
.d-alert { margin-left: 4px; }
.s-help { margin-left: 12px; margin-right: 6px; width: 16px; height: 16px; }
.d-help { margin: 0; }
.winctl { margin-left: auto; margin-right: 5px; display: flex; gap: 0; color: #222; }
.winctl i { width: 15px; height: 16px; position: relative; display: block; font-style: normal; text-align: center; font-weight: 700; font-size: 13px; line-height: 15px; color: #333; }
.winctl .min::after { content: ""; position: absolute; left: 2px; right: 2px; bottom: 1px; height: 2px; background: #222; }
.winctl .max::after { content: ""; position: absolute; left: 3px; top: 3px; width: 8px; height: 8px; border: 1px solid #333; }
.winctl .rst::after { content: ""; position: absolute; left: 2px; top: 5px; width: 8px; height: 8px; border: 1px solid #444; box-shadow: 3px -3px 0 -1px #6a6a6a, 3px -3px 0 0 #444; }
.menu { height: 20px; display: flex; align-items: center; padding-left: 13px; gap: 23px; color: #d6d6d6; font-size: 11px; }
.menu span { flex: none; white-space: nowrap; }
.menu .winctl { margin-left: auto; }

/* tabs */
.tabs { height: 27px; background: linear-gradient(#7d7d7d, #8a8a8a); display: flex; align-items: flex-end; padding: 0 0 2px 25px; gap: 3px; border-top: 1px solid #555; }
.tab { width: 112px; height: 22px; background: linear-gradient(#8d8d8d, #7c7c7c); color: #4a4a4a; font-size: 12px; line-height: 21px; padding-left: 9px; border-radius: 8px 8px 0 0; letter-spacing: .2px; }
.tab.active { width: 115px; background: linear-gradient(#e2e2e2, #b6b6b6); color: #333; position: relative; }
.tab b { position: absolute; right: 10px; top: 0; color: #777; font-size: 15px; }
.tab-add { width: 20px; height: 15px; margin: 0 0 4px 3px; background: #7a7a7a; border: 1px solid #666; border-radius: 8px 2px 8px 2px; color: #ccc; text-align: center; line-height: 12px; font-size: 12px; }

/* toolbars */
.tbar { height: 25px; display: flex; align-items: center; padding: 0 4px; }
.grip { width: 6px; height: 21px; flex: none; margin: 0 1px; background: repeating-linear-gradient(#333 0 1px, #8a8a8a 1px 2px); }
.grip.light { background: #ddd; border-left: 1px solid #888; border-right: 1px solid #888; margin: 0; }
.strip { display: flex; align-items: center; height: 21px; background: #ececec; flex: none; }
.b { width: 21.500px; padding: 1px 2px; height: 18px; }
.sep { width: 5.500px; height: 18px; flex: none; position: relative; }
.sep::after { content: ""; position: absolute; left: 2px; top: 0; bottom: 0; width: 1px; background: #b5b5b5; }
.drop { width: 12px; height: 8px; flex: none; position: relative; }
.drop::after { content: ""; position: absolute; left: 3px; top: 2px; border: 3px solid transparent; border-top: 3px solid #666; }
.combo { height: 20px; flex: none; background: linear-gradient(#fbfbfb, #dcdcdc); border: 1px solid #b5b5b5; border-radius: 2px; display: flex; align-items: center; position: relative; font-size: 12px; color: #333; }
.combo::after { content: ""; position: absolute; right: 3px; top: 7px; border: 4px solid transparent; border-top: 4px solid #222; }
.s-a { width: 23px; position: relative; justify-content: center; }
.a-glyph { font: 20px/21px "Liberation Serif", serif; color: #333; }
.a-brush { position: absolute; left: 4px; top: 3px; }
.s-d { width: 28px; margin-left: 2px; }
.s-t { width: 26px; margin-left: 2px; }
.s-d .b, .s-t .b { width: 23px; padding: 0 2px; }
.c-std { width: 110px; padding-left: 16px; }
.c-hxk { width: 110px; padding-left: 14px; }
.c-std3 { width: 81px; padding-left: 3px; }
.c-std3::after { display: none; }
.c-ws { width: 161px; padding-left: 7px; }
.s-g { margin-left: 2px; width: 42px; gap: 3px; padding-left: 1px; background: #d6d6d6; }
.g { width: 18px; }
.s-l { width: 22px; }
.s-l .b { width: 22px; }
.c-layer { width: 276px; padding-left: 3px; }
.l { width: 14px; height: 16px; margin-right: 1px; }
.swatch { width: 10px; height: 10px; border: 1px solid #222; background: #fff; flex: none; margin: 0 4px 0 2px; }
.s-m { width: 66px; margin-left: 2px; }
.c-color { width: 139px; padding-left: 3px; margin-left: 2px; }
.serif { font-family: "Liberation Serif", serif; font-size: 11px; }
.c-ltype { width: 146px; padding-left: 2px; }
.c-lw { width: 93px; padding-left: 4px; gap: 4px; }
.c-lw::after { display: none; }
.ln { height: 1px; background: #222; flex: none; }
.ln.long { width: 58px; margin-right: 5px; }
.ln.short { width: 31px; margin-right: 4px; }

/* main */
.main { height: 645px; margin-top: 4px; padding: 0 4px; display: flex; align-items: flex-start; }
.vbar { background: #ececec; display: grid; justify-items: center; align-items: center; border: 1px solid #8a8a8a; flex: none; }
.left { width: 23px; height: 417px; margin-right: 5px; grid-template-rows: 7px; grid-auto-rows: 20.420px; }
.hgrip { display: block; width: 100%; height: 100%; background: repeating-linear-gradient(90deg, #555 0 1px, #9a9a9a 1px 2px); }
.v { width: 18px; height: 18px; }
.big-a { font: 700 20px/20px "Liberation Sans", sans-serif; color: #333; }
.center { width: 933px; flex: none; }
.view-row { height: 630px; display: flex; }
.canvas { width: 916px; height: 630px; background: #212731; position: relative; flex: none; }
.drawing { display: block; width: 916px; height: 630px; }
.vp-label { position: absolute; left: 3px; top: 6px; color: #d4d4d4; font-size: 11px; }
.grid-minor { stroke: #252b35; stroke-width: 1; fill: none; }
.grid-major { stroke: #343b46; stroke-width: 1; fill: none; }
.white { fill: none; stroke: #f0f0f0; stroke-width: 1; }
.dot-c { fill: #eee; }
.cyan { fill: none; stroke: #2fc8c8; stroke-width: 1; }
.arrow { fill: #16eaf0; }
.dim { font: 38px "Liberation Sans", sans-serif; fill: #23d9df; }
.red { fill: #e8413c; }
.ucs { fill: none; stroke: #d4d4d4; stroke-width: 1.300; }
.ring { fill: none; stroke: #4c5259; stroke-width: 10; }
.cube-face { fill: #b8b8b8; }
.cube-in { fill: #a2a4a8; }
.cube-top { font: 30px "Noto Sans CJK SC", sans-serif; text-anchor: middle; fill: #6c7078; }
.cube-dir { font: 16px "Noto Sans CJK SC", sans-serif; text-anchor: middle; fill: #a6a8ab; }
.wcs { fill: #8e9298; }
.wcs-t { font: 10px "Liberation Sans", sans-serif; fill: #b4b6b9; }
.cross-shadow { stroke: #0c0c0c; fill: none; }
.cross-h { stroke: #c8c8c8; fill: none; }
.cross-v { stroke: #e8e8e8; fill: none; }
.pick { fill: none; stroke: #eee; }
.vscroll { width: 17px; background: #f2f2f2; position: relative; flex: none; }
.up, .dn { position: absolute; left: 5px; border: 4px solid transparent; }
.up { border-bottom: 4px solid #333; top: 3px; }
.dn { bottom: 2px; border-top: 4px solid #333; }
.thumb { position: absolute; left: 1px; top: 62px; width: 14px; height: 15px; background: linear-gradient(#eee, #c4c4c4); border: 1px solid #aaa; }
.layouts { height: 15px; background: #f2f2f2; display: flex; align-items: center; position: relative; padding-left: 2px; font-size: 11px; }
.nav { width: 13px; font-size: 8px; color: #666; text-align: center; flex: none; letter-spacing: -1px; }
.ltab { flex: none; padding: 0 4px; margin-left: 6px; height: 15px; line-height: 15px; color: #333; position: relative; }
.ltab.slash::after { content: ""; position: absolute; right: -6px; top: 1px; height: 14px; width: 1px; background: #555; transform: rotate(22deg); }
.ltab.cur { background: #111; color: #ddd; margin-left: 4px; padding: 0 5px; clip-path: polygon(0 0, 100% 0, 85% 100%, 15% 100%); }
.hhandle { position: absolute; left: 605px; top: 2px; width: 6px; height: 11px; background: #fff; border: 1px solid #ccc; }
.harrow { position: absolute; left: 614px; top: 4px; border: 3px solid transparent; border-right: 4px solid #333; }
.hthumb { position: absolute; left: 627px; top: 1px; width: 14px; height: 13px; background: linear-gradient(#eee, #c4c4c4); border: 1px solid #aaa; }
.rightcol { margin-left: 5px; width: 25px; flex: none; display: flex; flex-direction: column; }
.right { width: 25px; height: 378px; grid-template-rows: 6px; grid-auto-rows: 20.500px; }
.right2 { width: 25px; height: 135px; margin-top: 1px; grid-template-rows: 6px repeat(4, 21px) 6px repeat(2, 21px); }
.right2 .hgrip { background: repeating-linear-gradient(90deg, #222 0 1px, #666 1px 2px); }
.hsep { display: block; width: 20px; height: 3px; border-bottom: 1px solid #aaa; }

/* command */
.cmd { margin: 5px 4px 0; height: 53px; display: flex; }
.cmd-side { width: 20px; background: #454545; display: flex; flex-direction: column; align-items: center; color: #eee; }
.hgrip.dark { background: repeating-linear-gradient(90deg, #999 0 1px, #666 1px 2px); height: 10px; flex: none; }
.cmd-x { font-size: 22px; line-height: 20px; margin-top: 2px; font-weight: 700; }
.wrench { width: 14px; height: 14px; fill: #eee; margin-top: 2px; }
.cmd-main { flex: 1; min-width: 0; }
.cmd-log { height: 32px; background: #c6c6c6; padding: 2px 0 0 3px; font: 10.900px/14px "Liberation Mono", monospace; border-bottom: 1px solid #888; color: #333; white-space: nowrap; }
.log-line { height: 14px; }
.cmd-log em { font-style: italic; }
.cj { font: 12px/14px "Noto Sans CJK SC", sans-serif; }
.cmd-input { height: 21px; background: #fff; display: flex; align-items: center; padding-left: 6px; }
.prompt { width: 13px; height: 13px; font: 9px/12px "Liberation Mono", monospace; background: #ccc; border: 1px solid #aaa; color: #333; }
.p-drop { width: 4px; height: 1px; background: #888; margin: 0 0 0 5px; }
.ph { margin-left: 10px; color: #b5b5b5; font-style: italic; font-size: 12px; }

/* status */
.status { margin-top: 1px; height: 24px; background: linear-gradient(#8a8a8a, #7a7a7a); display: flex; align-items: center; padding-left: 4px; border-top: 1px solid #333; }
.coords { width: 203px; height: 22px; padding-left: 11px; font: 11px/22px "Liberation Sans", sans-serif; color: #2e2e2e; background: linear-gradient(90deg, #b8b8b8, #a8a8a8 75%, #8a8a8a); flex: none; letter-spacing: .5px; white-space: nowrap; }
.chips { display: flex; gap: 1.800px; flex: none; }
.c { width: 18.500px; height: 20px; padding: 1px; background: #b3b3b3; }
.c.on { background: #d8d8d8; }
.c.act { background: linear-gradient(#9fd0e4, #d2e9f2); }
.st-right { margin-left: auto; display: flex; align-items: center; gap: 2px; padding-right: 4px; }
.st-model { background: #b3b3b3; height: 20px; line-height: 20px; font-size: 12px; color: #222; padding: 0 1px; margin-right: 2px; }
.scale { margin-left: 14px; margin-right: 3px; width: 46px; height: 20px; background: #b3b3b3; display: flex; align-items: center; font: 11px "Liberation Serif", serif; gap: 1px; }
.scale .i { width: 14px; height: 14px; }
.s-drop { border: 3px solid transparent; border-top: 4px solid #222; margin-top: 3px; }
.sp { margin-left: 8px; }
.bulb-chip { margin-left: 2px; width: 22px; height: 20px; background: #b3b3b3; display: flex; justify-content: center; align-items: center; }
.st-drop { margin-left: 5px; width: 8px; height: 20px; background: #ccc; position: relative; }
.st-drop::after { content: ""; position: absolute; left: 1px; top: 8px; border: 3px solid transparent; border-top: 4px solid #111; }
.resize { width: 14px; height: 20px; background: radial-gradient(circle, #ddd 1px, transparent 1.500px) 0 0 / 4px 4px; margin-left: 2px; }

/* watermark */
.wm { position: absolute; left: 765px; top: 748px; width: 180px; height: 85px; background: #1c2d59; display: flex; align-items: center; padding-left: 14px; gap: 12px; }
.wm-logo { width: 36px; height: 38px; flex: none; }
.wm-s { fill: none; stroke: #c4c9d4; stroke-width: 2.500; }
.wm-s2 { fill: none; stroke: #c4c9d4; stroke-width: 1.500; }
.wm-f { fill: #c4c9d4; }
.wm-cn { font: 700 26px/32px "Noto Sans CJK SC", sans-serif; color: #d4d8e0; letter-spacing: 1px; white-space: nowrap; }
.wm-en { font: 9px/13px "Liberation Sans", sans-serif; color: #a8aebc; letter-spacing: 1.500px; white-space: nowrap; }
```
